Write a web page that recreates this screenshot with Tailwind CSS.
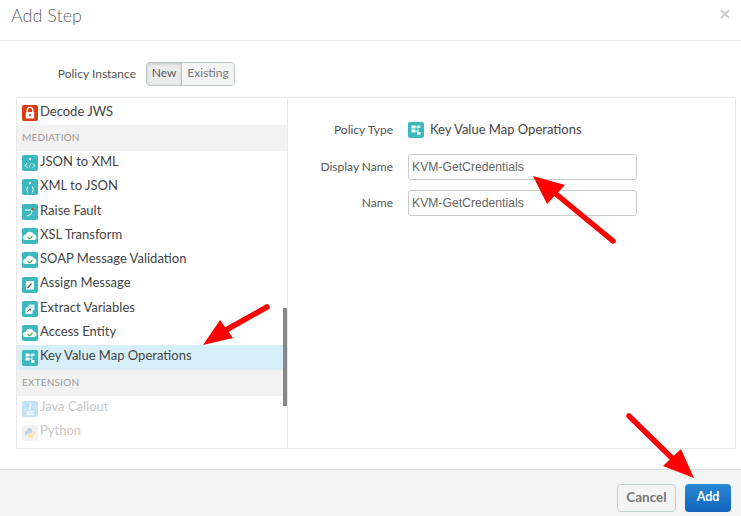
<!DOCTYPE html>
<html lang="en">
<head>
  <meta charset="UTF-8" />
  <title>Add Step</title>
  <script src="https://cdn.jsdelivr.net/npm/@tailwindcss/browser@4"></script>
</head>
<body class="relative w-[741px] h-[516px] overflow-hidden bg-white font-['Lato',sans-serif] text-[13px] text-[#555]">
  <!-- Header -->
  <div class="h-[41px] border-b border-[#e8e8e8] pl-[11px] pr-[11px] flex items-start justify-between">
    <h1 class="text-[18px] leading-[31px] font-light text-[#666]">Add Step</h1>
    <span class="text-[#ccc] mt-[6px]">
      <svg width="10" height="10" viewBox="0 0 10 10" class="mt-[3px]"><path d="M1 1 L9 9 M9 1 L1 9" stroke="#cfcfcf" stroke-width="2.4"/></svg>
    </span>
  </div>

  <!-- Body -->
  <div class="h-[428px] pl-[16px] pr-[5px] flex flex-col">
    <div class="h-[56px] flex items-center pt-[10px]">
      <span class="w-[120px] text-right text-[12px] text-[#555]">Policy Instance</span>
      <div class="ml-[10px] flex h-[24px] rounded-[4px] border border-[#bcc8c8] text-[12px] leading-[20px] overflow-hidden">
        <span class="w-[35px] text-center bg-[#ececec] text-[#555] border-r border-[#bcc8c8] shadow-[inset_0_1px_3px_rgba(0,0,0,0.18)]">New</span>
        <span class="w-[52px] text-center bg-[#f4f4f4] text-[#777]">Existing</span>
      </div>
    </div>

    <div class="h-[352px] border border-[#e8e8e8] flex">
      <!-- Policy list -->
      <div class="relative w-[271px] border-r border-[#e8e8e8] shrink-0">
        <div class="h-[27px] pl-[5px] flex items-center gap-[2px]">
          <svg width="16" height="16" viewBox="0 0 16 16" class="mt-[3px]"><rect width="16" height="16" rx="2" fill="#dd3a12"/><path d="M5.2 7V5.2a2.8 2.8 0 0 1 5.6 0V7" fill="none" stroke="#fff" stroke-width="1.4"/><rect x="3.8" y="7" width="8.4" height="6.5" rx=".6" fill="#fff"/><rect x="7.3" y="9" width="1.4" height="2.4" fill="#dd3a12"/></svg>
          <span class="text-[#444]">Decode JWS</span>
        </div>
        <div class="h-[26px] bg-[#f2f2f2] pl-[5px] pb-[2px] flex items-center text-[10px] tracking-[0.2px] text-[#999]">MEDIATION</div>

        <div class="h-[24.3px] pl-[5px] flex items-center gap-[2px]">
          <svg width="16" height="16" viewBox="0 0 16 16"><rect width="16" height="16" rx="2" fill="#3cb8c0"/><path d="M5 8.5 L3.2 10.5 L5 12.5 M11 8.5 L12.8 10.5 L11 12.5 M9 8.3 L7 12.7" fill="none" stroke="#fff" stroke-width="1"/><circle cx="8" cy="4.2" r="1.1" fill="#fff"/></svg>
          <span class="pb-[3px] text-[#444]">JSON to XML</span>
        </div>
        <div class="h-[24.3px] pl-[5px] flex items-center gap-[2px]">
          <svg width="16" height="16" viewBox="0 0 16 16"><rect width="16" height="16" rx="2" fill="#3cb8c0"/><path d="M5.6 7.5 Q4 10.5 5.6 13.5 M10.4 7.5 Q12 10.5 10.4 13.5" fill="none" stroke="#fff" stroke-width="1"/><circle cx="8" cy="4.2" r="1.1" fill="#fff"/></svg>
          <span class="pb-[3px] text-[#444]">XML to JSON</span>
        </div>
        <div class="h-[24.3px] pl-[5px] flex items-center gap-[2px]">
          <svg width="16" height="16" viewBox="0 0 16 16"><rect width="16" height="16" rx="2" fill="#3cb8c0"/><path d="M3 6 H9 Q11 6 9.5 9 Q8.5 11.5 5 12" fill="none" stroke="#fff" stroke-width="1"/><circle cx="10.5" cy="5" r="1.2" fill="#d8402a"/></svg>
          <span class="pb-[2px] text-[#444]">Raise Fault</span>
        </div>
        <div class="h-[24.3px] pl-[5px] flex items-center gap-[2px]">
          <svg width="16" height="16" viewBox="0 0 16 16"><rect width="16" height="16" rx="2" fill="#3cb8c0"/><path d="M3.5 12 a2.5 2.5 0 0 1 0-5 a4.5 4.5 0 0 1 8.5-.5 a2.8 2.8 0 0 1 .5 5.5 Z" fill="#fff"/><path d="M5.5 9.3 L7.3 10.8 L10.5 8.3" fill="none" stroke="#4caf50" stroke-width="1.2"/></svg>
          <span class="pb-[3px] text-[#444]">XSL Transform</span>
        </div>
        <div class="h-[24.3px] pl-[5px] flex items-center gap-[2px]">
          <svg width="16" height="16" viewBox="0 0 16 16"><rect width="16" height="16" rx="2" fill="#3cb8c0"/><path d="M3.5 12 a2.5 2.5 0 0 1 0-5 a4.5 4.5 0 0 1 8.5-.5 a2.8 2.8 0 0 1 .5 5.5 Z" fill="#fff"/><path d="M5.5 9.3 L7.3 10.8 L10.5 8.3" fill="none" stroke="#4caf50" stroke-width="1.2"/></svg>
          <span class="pb-[3px] text-[#444]">SOAP Message Validation</span>
        </div>
        <div class="h-[24.3px] pl-[5px] flex items-center gap-[2px]">
          <svg width="16" height="16" viewBox="0 0 16 16"><rect width="16" height="16" rx="2" fill="#3cb8c0"/><rect x="4" y="4" width="8" height="8.5" fill="#fff"/><path d="M5.5 11 L9.5 6.5" stroke="#555" stroke-width="1.2"/></svg>
          <span class="pb-[3px] text-[#444]">Assign Message</span>
        </div>
        <div class="h-[24.3px] pl-[5px] flex items-center gap-[2px]">
          <svg width="16" height="16" viewBox="0 0 16 16"><rect width="16" height="16" rx="2" fill="#3cb8c0"/><rect x="6.5" y="3.5" width="6" height="6" fill="#cfeef0"/><rect x="3.5" y="6.5" width="7" height="6.5" fill="#fff"/><path d="M5.5 10.5 L8.5 8 M6.8 8 H8.5 V9.6" fill="none" stroke="#555" stroke-width="1"/></svg>
          <span class="pb-[3px] text-[#444]">Extract Variables</span>
        </div>
        <div class="h-[24.3px] pl-[5px] flex items-center gap-[2px]">
          <svg width="16" height="16" viewBox="0 0 16 16"><rect width="16" height="16" rx="2" fill="#3cb8c0"/><path d="M3.5 12 a2.5 2.5 0 0 1 0-5 a4.5 4.5 0 0 1 8.5-.5 a2.8 2.8 0 0 1 .5 5.5 Z" fill="#fff"/><path d="M5.5 9.3 L7.3 10.8 L10.5 8.3" fill="none" stroke="#4caf50" stroke-width="1.2"/></svg>
          <span class="pb-[3px] text-[#444]">Access Entity</span>
        </div>
        <div class="h-[25px] bg-[#d7eff9] pl-[5px] flex items-center gap-[2px]">
          <svg width="16" height="16" viewBox="0 0 16 16"><rect width="16" height="16" rx="2" fill="#3cb8c0"/><rect x="3.5" y="3.5" width="4" height="3" fill="#fff"/><rect x="3.5" y="7.5" width="4" height="3" fill="#fff"/><path d="M7.5 5 H10 V11.5 M7.5 9 H10" fill="none" stroke="#fff" stroke-width=".8"/><rect x="9" y="3.5" width="3.5" height="2.5" fill="#cfeef0"/><rect x="9" y="10" width="3.5" height="2.8" fill="#fff"/></svg>
          <span class="pb-[4px] text-[#444]">Key Value Map Operations</span>
        </div>
        <div class="h-[26px] bg-[#f2f2f2] pl-[5px] pb-[2px] flex items-center text-[10px] tracking-[0.2px] text-[#999]">EXTENSION</div>
        <div class="h-[24.3px] pl-[5px] flex items-center gap-[2px] text-[#c8c8c8]">
          <svg width="16" height="16" viewBox="0 0 16 16"><rect width="16" height="16" rx="2" fill="#c5e2f4"/><path d="M8 2 Q10 5 7.5 7 Q6.5 8.5 8.5 9.5" fill="none" stroke="#fff" stroke-width="1"/><path d="M4.5 10.5 H11 M5 12 H10.5 M4 13.5 H12" stroke="#fff" stroke-width=".9"/></svg>
          <span class="pb-[3px]">Java Callout</span>
        </div>
        <div class="h-[24.3px] pl-[5px] flex items-center gap-[2px] text-[#c8c8c8]">
          <svg width="16" height="16" viewBox="0 0 16 16"><rect width="16" height="16" rx="2" fill="#f2f2f0"/><path d="M8 3 H6 Q5 3 5 4.5 V6 H3.8 Q2.8 6 2.8 8 Q2.8 10 3.8 10 H5 V8.5 H8.5 Q10 8.5 10 7 V4.5 Q10 3 8 3 Z" fill="#b9d3ea"/><path d="M8 13 H10 Q11 13 11 11.5 V10 H12.2 Q13.2 10 13.2 8 Q13.2 6 12.2 6 H11 V9.3 H7.5 Q6 9.3 6 10.5 V11.5 Q6 13 8 13 Z" fill="#fbe3a8"/></svg>
          <span class="pb-[4px]">Python</span>
        </div>
        <!-- scrollbar -->
        <div class="absolute right-0 top-[210px] w-[4px] h-[98px] bg-[#888]"></div>
      </div>

      <!-- Detail form -->
      <div class="flex-1 pt-[20px] text-[12px]">
        <div class="h-[24px] flex items-center">
          <span class="w-[105px] text-right text-[#555]">Policy Type</span>
          <svg width="16" height="16" viewBox="0 0 16 16" class="ml-[15px]"><rect width="16" height="16" rx="2" fill="#3cb8c0"/><rect x="3.5" y="3.5" width="4" height="3" fill="#fff"/><rect x="3.5" y="7.5" width="4" height="3" fill="#fff"/><path d="M7.5 5 H10 V11.5 M7.5 9 H10" fill="none" stroke="#fff" stroke-width=".8"/><rect x="9" y="3.5" width="3.5" height="2.5" fill="#cfeef0"/><rect x="9" y="10" width="3.5" height="2.8" fill="#fff"/></svg>
          <span class="ml-[6px] text-[13px] text-[#444]">Key Value Map Operations</span>
        </div>
        <div class="mt-[12px] flex items-center">
          <span class="w-[105px] text-right text-[#555]">Display Name</span>
          <input value="KVM-GetCredentials" class="ml-[15px] w-[229px] h-[26px] px-[3px] border border-[#ccc] rounded-[3px] text-[12.2px] text-[#666] font-['Liberation_Sans',sans-serif]" />
        </div>
        <div class="mt-[10px] flex items-center">
          <span class="w-[105px] text-right text-[#555]">Name</span>
          <input value="KVM-GetCredentials" class="ml-[15px] w-[229px] h-[26px] px-[3px] border border-[#ccc] rounded-[3px] text-[12.2px] text-[#666] font-['Liberation_Sans',sans-serif]" />
        </div>
      </div>
    </div>
  </div>

  <!-- Footer -->
  <div class="h-[47px] border-t border-[#ddd] bg-[#f5f5f5] flex items-start justify-end gap-[9px] pt-[14px] pr-[10px] font-bold">
    <button class="w-[59px] h-[28px] pb-[2px] rounded-[4px] border border-[#c5cfcf] bg-[#f4f4f4] text-[13.5px] text-[#777]">Cancel</button>
    <button class="w-[46px] h-[28px] pb-[2px] rounded-[4px] bg-gradient-to-b from-[#2a8ad4] to-[#1463bd] text-[12.5px] text-white">Add</button>
  </div>

  <!-- Annotation arrows -->
  <svg class="absolute inset-0 pointer-events-none" width="741" height="516" viewBox="0 0 741 516">
    <g fill="#ff0000" stroke="none">
      <path d="M267 307 L226 330" stroke="#ff0000" stroke-width="5.5" stroke-linecap="round"/>
      <path d="M203 345 L220 320 L233 338 Z"/>
      <path d="M613 241 L556 194" stroke="#ff0000" stroke-width="5.5" stroke-linecap="round"/>
      <path d="M533 176 L565 185 L547 204 Z"/>
      <path d="M629 416 L672 458" stroke="#ff0000" stroke-width="5.5" stroke-linecap="round"/>
      <path d="M694 478 L681 449 L663 466 Z"/>
    </g>
  </svg>
</body>
</html>
